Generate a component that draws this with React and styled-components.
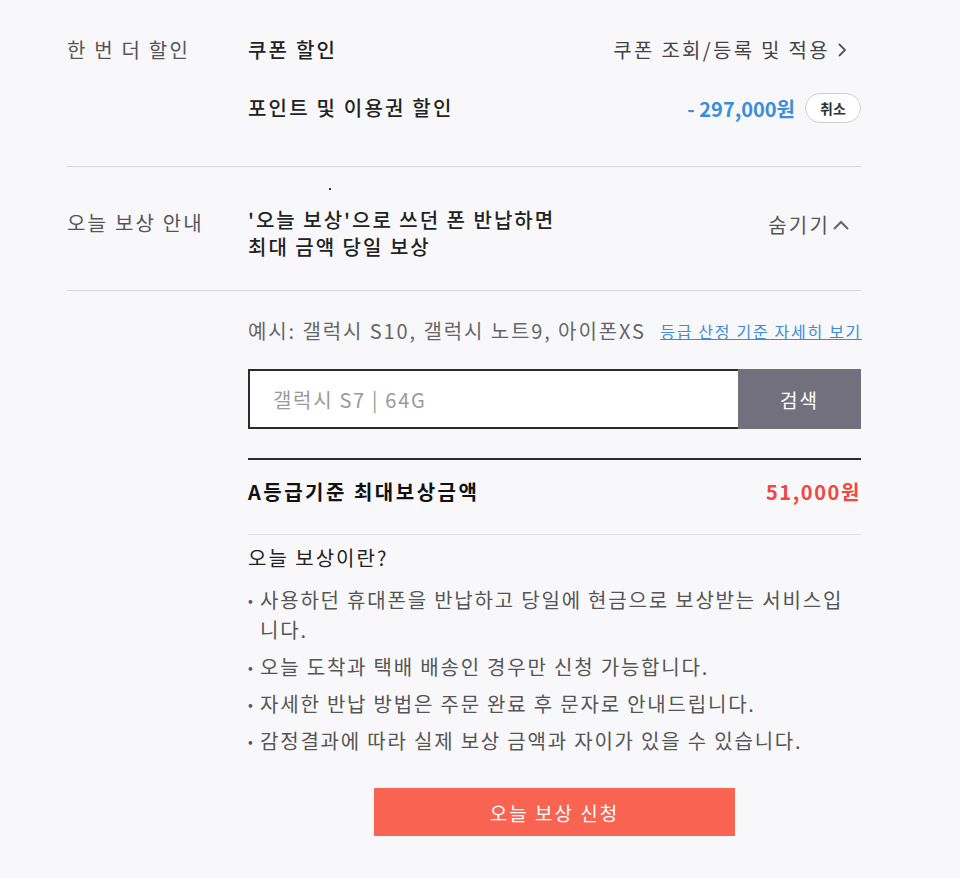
import styled, { createGlobalStyle } from "styled-components";

const GlobalStyle = createGlobalStyle`
    body {
        margin: 0;
        background: #f8f8fa;
        font-family: "Noto Sans CJK KR", "Noto Sans", sans-serif;
        color: #222222;
    }
`;

const bullets = [
    <>사용하던 휴대폰을 반납하고 당일에 현금으로 보상받는 서비스입<br />니다.</>,
    "오늘 도착과 택배 배송인 경우만 신청 가능합니다.",
    "자세한 반납 방법은 주문 완료 후 문자로 안내드립니다.",
    "감정결과에 따라 실제 보상 금액과 자이가 있을 수 있습니다.",
];

function ChevronRight() {
    return (
        <svg width="12" height="16" viewBox="0 0 12 16">
            <polyline points="3,2 9,8 3,14" fill="none" stroke="#555" strokeWidth="1.8" />
        </svg>
    );
}

function ChevronUp() {
    return (
        <svg width="18" height="12" viewBox="0 0 18 12">
            <polyline points="2,10 9,3 16,10" fill="none" stroke="#666" strokeWidth="2" />
        </svg>
    );
}

function App() {
    return (
        <>
            <GlobalStyle />
            <Page>
                <Section pad="35px 0 43px">
                    <Label>한 번 더 할인</Label>
                    <Content>
                        <Line>
                            <Title>쿠폰 할인</Title>
                            <Action>쿠폰 조회/등록 및 적용 <ChevronRight /></Action>
                        </Line>
                        <Line top={28}>
                            <Title>포인트 및 이용권 할인</Title>
                            <Discount>
                                <Amount color="#3a8ddc">- 297,000원</Amount>
                                <Pill>취소</Pill>
                            </Discount>
                        </Line>
                    </Content>
                </Section>

                <Section pad="21px 0 30px">
                    <Label top={20}>오늘 보상 안내</Label>
                    <Content>
                        <Dot />
                        <Line align="flex-start">
                            <Heading>'오늘 보상'으로 쓰던 폰 반납하면<br />최대 금액 당일 보상</Heading>
                            <Toggle>숨기기<ChevronUp /></Toggle>
                        </Line>
                    </Content>
                </Section>

                <Detail>
                    <Example>
                        <span>예시: 갤럭시 S10, 갤럭시 노트9, 아이폰XS</span>
                        <Link>등급 산정 기준 자세히 보기</Link>
                    </Example>
                    <Search>
                        <Input placeholder="갤럭시 S7 | 64G" />
                        <SearchButton>검색</SearchButton>
                    </Search>
                    <MaxRow>
                        <Strong>A등급기준 최대보상금액</Strong>
                        <Amount color="#f2463f" spacing={1.6}>51,000원</Amount>
                    </MaxRow>
                    <InfoTitle>오늘 보상이란?</InfoTitle>
                    <List>
                        {bullets.map((b, i) => <Item key={i}>{b}</Item>)}
                    </List>
                    <Apply>오늘 보상 신청</Apply>
                </Detail>
            </Page>
        </>
    );
}

export default App;

const Page = styled.div`
    width: 794px;
    margin-left: 67px;
    padding-bottom: 41px;
`;

const Section = styled.section`
    display: grid;
    grid-template-columns: 181px 1fr;
    padding: ${props => props.pad};
    border-bottom: 1px solid #d9d9dc;
`;

const Label = styled.div`
    font-size: 20px;
    line-height: 30px;
    letter-spacing: 2.2px;
    color: #555555;
    margin-top: ${props => props.top || 0}px;
`;

const Content = styled.div`
    display: flex;
    flex-direction: column;
`;

const Line = styled.div`
    display: flex;
    justify-content: space-between;
    align-items: ${props => props.align || "center"};
    margin-top: ${props => props.top || 0}px;
`;

const Title = styled.div`
    font-size: 20px;
    line-height: 30px;
    font-weight: 500;
    letter-spacing: 2.2px;
    color: #222222;
`;

const Heading = styled(Title)`
    line-height: 27px;
    letter-spacing: 2px;
`;

const Action = styled.div`
    display: flex;
    align-items: center;
    gap: 6px;
    font-size: 20px;
    line-height: 30px;
    letter-spacing: 2.3px;
    color: #444444;
    margin-right: 13px;
`;

const Toggle = styled(Action)`
    margin: 4px 11px 0 0;
    gap: 2px;
    letter-spacing: 2.2px;
    color: #555555;
`;

const Discount = styled.div`
    display: flex;
    align-items: center;
    gap: 10px;
`;

const Amount = styled.span`
    font-size: 20px;
    font-weight: 700;
    letter-spacing: ${props => props.spacing || 0}px;
    color: ${props => props.color};
`;

const Pill = styled.button`
    height: 30px;
    width: 56px;
    border: 1px solid #cfcfd3;
    border-radius: 15px;
    background: #ffffff;
    font-family: inherit;
    font-size: 14px;
    font-weight: 700;
    color: #333333;
    padding: 0;
`;

const Dot = styled.div`
    width: 2px;
    height: 2px;
    background: #333333;
    margin: 0 0 16px 81px;
`;

const Detail = styled.div`
    margin-left: 181px;
    padding-top: 26px;
    display: flex;
    flex-direction: column;
`;

const Example = styled.div`
    display: flex;
    justify-content: space-between;
    align-items: center;
    font-size: 20px;
    line-height: 28px;
    color: #666666;
    letter-spacing: 1.9px;
`;

const Link = styled.a`
    font-size: 16px;
    color: #3a8ddc;
    text-decoration: underline;
    letter-spacing: 1.7px;
    margin-right: -1px;
`;

const Search = styled.div`
    display: flex;
    height: 60px;
    margin-top: 24px;
`;

const Input = styled.input`
    flex: 1;
    min-width: 0;
    border: 2px solid #2b2b2b;
    border-right: none;
    background: #ffffff;
    padding: 0 0 0 23px;
    font-family: inherit;
    font-size: 20px;
    letter-spacing: 1.7px;
    outline: none;

    &::placeholder {
        color: #9a9a9a;
    }
`;

const SearchButton = styled.button`
    width: 123px;
    border: none;
    background: #72707c;
    color: #ffffff;
    font-family: inherit;
    font-size: 19px;
    letter-spacing: 2px;
`;

const MaxRow = styled.div`
    display: flex;
    justify-content: space-between;
    align-items: center;
    height: 62px;
    padding-bottom: 12px;
    margin-top: 29px;
    border-top: 2px solid #2b2b2b;
    border-bottom: 1px solid #e3e3e6;
`;

const Strong = styled.span`
    font-size: 20px;
    font-weight: 700;
    letter-spacing: 2.5px;
    color: #111111;
`;

const InfoTitle = styled.div`
    font-size: 20px;
    line-height: 28px;
    letter-spacing: 2px;
    color: #222222;
    margin-top: 9px;
`;

const List = styled.ul`
    list-style: none;
    margin: 13px 0 0;
    padding: 0;
`;

const Item = styled.li`
    position: relative;
    padding-left: 12px;
    font-size: 20px;
    line-height: 30px;
    letter-spacing: 1.8px;
    color: #555555;
    margin-bottom: 7px;

    &::before {
        content: "•";
        position: absolute;
        left: 0;
        font-size: 14px;
    }
`;

const Apply = styled.button`
    align-self: center;
    width: 361px;
    height: 48px;
    margin-top: 25px;
    border: none;
    background: #f96352;
    color: #ffffff;
    font-family: inherit;
    font-size: 19px;
    letter-spacing: 2px;
`;
